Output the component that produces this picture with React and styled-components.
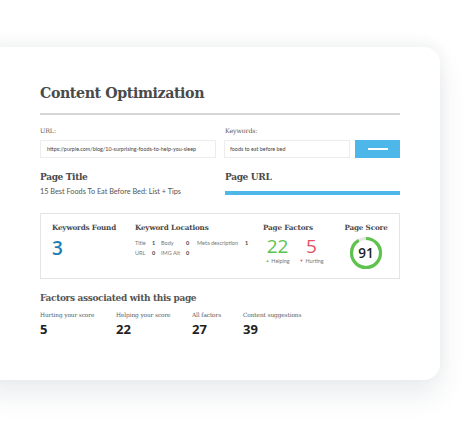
import React from "react";
import styled, { createGlobalStyle } from "styled-components";

const GlobalStyle = createGlobalStyle`
  html, body {
    margin: 0;
    padding: 0;
    background: #ffffff;
    overflow: hidden;
  }
  body {
    font-family: Lato, "Open Sans", sans-serif;
  }
`;

const slab = `"DejaVu Serif", "Liberation Serif", serif`;

const Page = styled.div`
  width: 474px;
  height: 428px;
  padding-top: 47px;
  box-sizing: border-box;
`;

const Card = styled.div`
  margin-left: -20px;
  width: 460px;
  height: 333px;
  box-sizing: border-box;
  padding: 35px 40px 0 60px;
  background: #fff;
  border-radius: 16px;
  box-shadow: 0 14px 28px rgba(40, 60, 80, 0.1), 0 -5px 14px rgba(40, 60, 80, 0.05);
`;

const Title = styled.h1`
  margin: 0;
  font-family: ${slab};
  font-weight: bold;
  font-size: 14.2px;
  letter-spacing: -0.4px;
  line-height: 22px;
  color: #4a4a4a;
`;

const Divider = styled.div`
  margin-top: 9px;
  height: 2px;
  background: #d6d6d6;
`;

const FormRow = styled.div`
  margin-top: 11px;
  display: grid;
  grid-template-columns: 176px 126px 1fr;
  column-gap: 8px;
  row-gap: 4px;
  & > :nth-child(2) {
    grid-column: span 2;
    margin-left: 1px;
  }
`;

const Label = styled.div`
  font-family: ${slab};
  font-size: 6.3px;
  letter-spacing: -0.1px;
  line-height: 10px;
  color: #5a5a5a;
`;

const Input = styled.div`
  height: 18px;
  box-sizing: border-box;
  border: 1px solid #ececec;
  padding-left: ${(p) => p.$pad || 6}px;
  display: flex;
  align-items: center;
  font-size: 5.4px;
  color: #444;
  white-space: nowrap;
  overflow: hidden;
`;

const SubmitButton = styled.div`
  height: 18px;
  background: #4cb7e8;
  display: flex;
  align-items: center;
  justify-content: center;
  margin-left: -3px;
  &::after {
    content: "";
    width: 20px;
    height: 2px;
    background: #fff;
  }
`;

const InfoRow = styled.div`
  margin-top: 12px;
  display: grid;
  grid-template-columns: 185px 175px;
`;

const SubHeading = styled.h2`
  margin: 0;
  font-family: ${slab};
  font-weight: bold;
  font-size: 9px;
  letter-spacing: -0.35px;
  line-height: 14px;
  color: #4a4a4a;
`;

const PageTitleText = styled.div`
  margin-top: 3px;
  font-size: 7.3px;
  line-height: 10px;
  color: #555;
`;

const UrlBar = styled.div`
  margin-top: 7px;
  height: 3.5px;
  background: #4cb7e8;
`;

const StatsBox = styled.div`
  margin-top: 16px;
  height: 66px;
  box-sizing: border-box;
  border: 1px solid #e4e4e4;
  padding: 9px 11px 0 11px;
  display: grid;
  grid-template-columns: 83px 128px 81px 1fr;
`;

const StatCol = styled.div`
  display: flex;
  flex-direction: column;
  align-items: ${(p) => (p.$center ? "center" : "flex-start")};
`;

const StatHeading = styled.div`
  font-family: ${slab};
  font-weight: bold;
  font-size: 7.2px;
  letter-spacing: -0.15px;
  line-height: 10px;
  color: #4a4a4a;
  white-space: nowrap;
`;

const BigNumber = styled.div`
  margin-top: ${(p) => p.$top || 5}px;
  font-family: "Open Sans", Lato, sans-serif;
  font-weight: ${(p) => p.$weight || 400};
  font-size: 19px;
  line-height: 20px;
  color: ${(p) => p.$color};
`;

const LocGrid = styled.div`
  margin-top: 6px;
  display: grid;
  grid-template-columns: 17px 9px 25px 11px 48px 8px;
  row-gap: 1.5px;
  font-size: 5.5px;
  line-height: 8px;
  color: #777;
  white-space: nowrap;
`;

const LocValue = styled.span`
  color: #444;
  font-weight: bold;
`;

const FactorPair = styled.div`
  margin-top: 2px;
  margin-left: 1px;
  display: flex;
  gap: 7px;
`;

const Factor = styled.div`
  width: 27px;
  display: flex;
  flex-direction: column;
  align-items: center;
`;

const FactorNote = styled.div`
  margin-top: 1px;
  font-size: 5.4px;
  line-height: 8px;
  color: #777;
  white-space: nowrap;
  display: flex;
  align-items: center;
  gap: 2px;
`;

const Arrow = styled.span`
  font-size: 4px;
  color: ${(p) => p.$color};
`;

const ScoreRing = styled.div`
  margin-top: 3px;
  position: relative;
  width: 34px;
  height: 34px;
`;

const ScoreText = styled.div`
  position: absolute;
  inset: 0;
  display: flex;
  align-items: center;
  justify-content: center;
  font-family: "Open Sans", Lato, sans-serif;
  font-weight: 600;
  font-size: 13.5px;
  color: #222;
`;

const FactorsHeading = styled(SubHeading)`
  margin-top: 12px;
  color: #555;
`;

const SummaryRow = styled.div`
  margin-top: 6px;
  display: flex;
`;

const SummaryItem = styled.div`
  width: ${(p) => p.$w}px;
  display: flex;
  flex-direction: column;
`;

const SummaryLabel = styled.div`
  font-family: ${slab};
  font-size: 5.8px;
  letter-spacing: -0.1px;
  line-height: 9px;
  color: #5a5a5a;
  white-space: nowrap;
`;

const SummaryValue = styled.div`
  margin-top: 2px;
  font-family: "Open Sans", Lato, sans-serif;
  font-weight: bold;
  font-size: 13px;
  line-height: 15px;
  color: #222;
`;

const locations = [
  ["Title", 1, "Body", 0, "Meta description", 1],
  ["URL", 0, "IMG Alt", 0],
];

const summary = [
  { label: "Hurting your score", value: 5, w: 76 },
  { label: "Helping your score", value: 22, w: 76 },
  { label: "All factors", value: 27, w: 51 },
  { label: "Content suggestions", value: 39, w: 90 },
];

const Ring = ({ score }) => {
  const r = 14.5;
  const c = 2 * Math.PI * r;
  return (
    <svg width="34" height="34" viewBox="0 0 34 34">
      <circle cx="17" cy="17" r={r} fill="none" stroke="#e6e6e6" strokeWidth="3.2" />
      <circle
        cx="17"
        cy="17"
        r={r}
        fill="none"
        stroke="#5ec34d"
        strokeWidth="3.2"
        strokeDasharray={`${(c * score) / 100} ${c}`}
        transform="rotate(-90 17 17)"
      />
    </svg>
  );
};

export default function App() {
  return (
    <Page>
      <GlobalStyle />
      <Card>
        <Title>Content Optimization</Title>
        <Divider />

        <FormRow>
          <Label>URL:</Label>
          <Label>Keywords:</Label>
          <Input>https://purple.com/blog/10-surprising-foods-to-help-you-sleep</Input>
          <Input $pad={5}>foods to eat before bed</Input>
          <SubmitButton />
        </FormRow>

        <InfoRow>
          <div>
            <SubHeading>Page Title</SubHeading>
            <PageTitleText>15 Best Foods To Eat Before Bed: List + Tips</PageTitleText>
          </div>
          <div>
            <SubHeading>Page URL</SubHeading>
            <UrlBar />
          </div>
        </InfoRow>

        <StatsBox>
          <StatCol>
            <StatHeading>Keywords Found</StatHeading>
            <BigNumber $color="#1f7db6" $weight={600}>3</BigNumber>
          </StatCol>
          <StatCol>
            <StatHeading>Keyword Locations</StatHeading>
            <LocGrid>
              {locations.flatMap((row, i) =>
                row.map((cell, j) =>
                  j % 2 ? (
                    <LocValue key={`${i}-${j}`}>{cell}</LocValue>
                  ) : (
                    <span key={`${i}-${j}`}>{cell}</span>
                  )
                )
              )}
            </LocGrid>
          </StatCol>
          <StatCol>
            <StatHeading>Page Factors</StatHeading>
            <FactorPair>
              <Factor>
                <BigNumber $color="#5ec34d" $top={1}>22</BigNumber>
                <FactorNote>
                  <Arrow $color="#5ec34d">▲</Arrow>Helping
                </FactorNote>
              </Factor>
              <Factor>
                <BigNumber $color="#e8505f" $top={1}>5</BigNumber>
                <FactorNote>
                  <Arrow $color="#e8505f">▼</Arrow>Hurting
                </FactorNote>
              </Factor>
            </FactorPair>
          </StatCol>
          <StatCol $center>
            <StatHeading>Page Score</StatHeading>
            <ScoreRing>
              <Ring score={91} />
              <ScoreText>91</ScoreText>
            </ScoreRing>
          </StatCol>
        </StatsBox>

        <FactorsHeading>Factors associated with this page</FactorsHeading>
        <SummaryRow>
          {summary.map((s) => (
            <SummaryItem key={s.label} $w={s.w}>
              <SummaryLabel>{s.label}</SummaryLabel>
              <SummaryValue>{s.value}</SummaryValue>
            </SummaryItem>
          ))}
        </SummaryRow>
      </Card>
    </Page>
  );
}
